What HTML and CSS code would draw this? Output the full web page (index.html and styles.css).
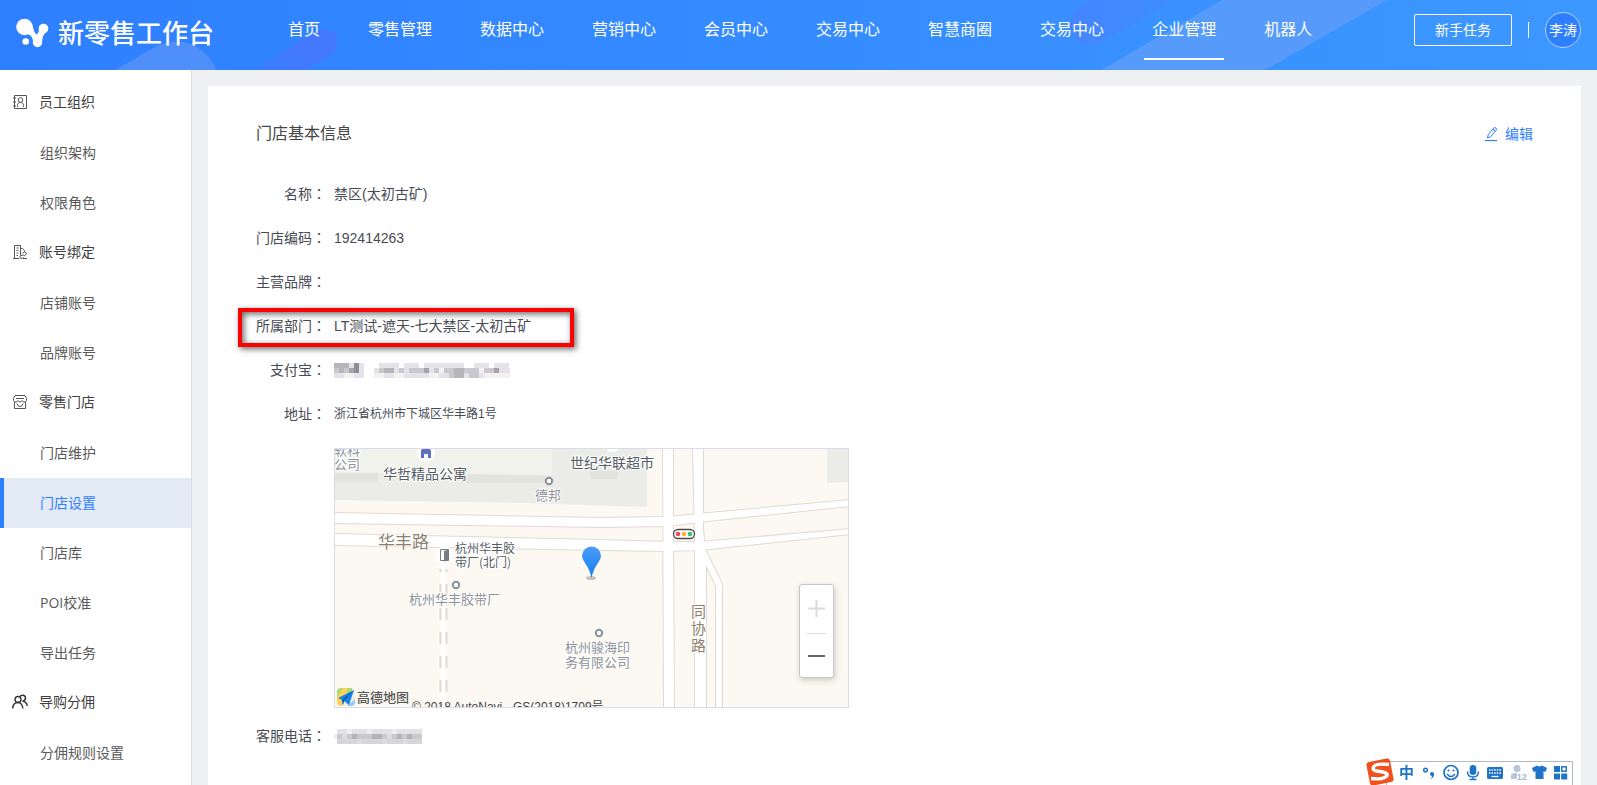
FILE: index.html
```html
<!DOCTYPE html>
<html lang="zh-CN">
<head>
<meta charset="utf-8">
<title>新零售工作台</title>
<meta name="viewport" content="width=device-width, initial-scale=1">
<link rel="stylesheet" href="styles.css">
</head>
<body>
<header class="topbar">
  <svg class="topbar-art" width="1597" height="70" viewBox="0 0 1597 70" aria-hidden="true">
    <defs>
      <linearGradient id="violetA" x1="0" y1="1" x2="1" y2="0"><stop offset="0" stop-color="#4478ff" stop-opacity=".3"/><stop offset=".5" stop-color="#4478ff"/></linearGradient>
      <linearGradient id="violetB" x1="0" y1="0" x2="1" y2="0"><stop offset="0" stop-color="#4585fd"/><stop offset="1" stop-color="#4585fd" stop-opacity=".3"/></linearGradient>
    </defs>
    <path d="M115 70 157 46Q175 38 191 44Q209 52 216 70Z" fill="#4f8ffa"/>
    <path d="M252 70 315 32Q330 26 336 36Q341 49 328 57L306 70Z" fill="url(#violetA)"/>
    <path d="M1090 0 1079 7Q1067 18 1072 34Q1080 50 1098 44Q1106 40 1174 0Z" fill="url(#violetB)"/>
    <path d="M1101 70 1222 0H1387L1265 70Z" fill="#569afa"/>
  </svg>
  <a class="brand" href="#">
    <svg class="brand-mark" width="34" height="30" viewBox="0 0 34 30" aria-hidden="true">
      <g fill="#fff"><circle cx="8.500" cy="9" r="8.300"/><circle cx="27.500" cy="10.500" r="4.800"/><circle cx="21.500" cy="24.500" r="4.700"/><circle cx="9.700" cy="23.500" r="3.300"/>
      <path d="M14 4Q17 8 17.500 11Q19 17 21 16Q23 15 23 10L31 13Q26 17 26 25L17 24.500Q17 18 12.500 16.500L8 15Z"/></g>
    </svg>
    <span class="brand-name">新零售工作台</span>
  </a>
  <nav class="nav" aria-label="主导航">
    <a href="#">首页</a><a href="#">零售管理</a><a href="#">数据中心</a><a href="#">营销中心</a><a href="#">会员中心</a><a href="#">交易中心</a><a href="#">智慧商圈</a><a href="#">交易中心</a><a class="current" href="#">企业管理</a><a href="#">机器人</a>
  </nav>
  <div class="account">
    <button class="task-btn" type="button">新手任务</button>
    <span class="divider"></span>
    <button class="avatar" type="button">李涛</button>
  </div>
</header>

<div class="layout">
  <nav class="sidebar" aria-label="企业管理">
    <div class="group">
      <svg class="ico" width="16" height="16" viewBox="0 0 16 16" aria-hidden="true"><path d="M2.500 1.500h12v13h-12zM1 4h3M1 8h3M1 12h3M5.500 13v-1.500c0-2 1-3 3-3s3 1 3 3V13"/><circle cx="8.500" cy="6" r="2.300"/></svg>
      员工组织
    </div>
    <a href="#">组织架构</a>
    <a href="#">权限角色</a>
    <div class="group">
      <svg class="ico" width="16" height="16" viewBox="0 0 16 16" aria-hidden="true"><path d="M1 14.500h6M2.500 14.500v-13h6v10M8.500 4.500h2l2 2v1M4.500 4h2M4.500 6.500h2M4.500 9h2M4.500 11.500h1.500M10 9.500l1-1q2-1 3 0q1 1.500-.5 2.500l-1.500 1M12 11l-3 .5q-2 1-1 2.300q1 1 2.500.4l1-1M11 14.500h4"/></svg>
      账号绑定
    </div>
    <a href="#">店铺账号</a>
    <a href="#">品牌账号</a>
    <div class="group">
      <svg class="ico" width="16" height="16" viewBox="0 0 16 16" aria-hidden="true"><path d="M3 1.500h10l1.500 3v2q-1 2-2.500 1.500q-1.200 0-2-1.500q-.8 1.500-2 1.500T6 6.500Q5.200 8 4 8Q2.500 8.500 1.500 6.500v-2zM4 4.500h8M2.500 8v6.500h11V8M5 9.500q.5 3 3 3t3-3"/></svg>
      零售门店
    </div>
    <a href="#">门店维护</a>
    <a class="active" href="#">门店设置</a>
    <a href="#">门店库</a>
    <a href="#">POI校准</a>
    <a href="#">导出任务</a>
    <div class="group">
      <svg class="ico bold" width="16" height="16" viewBox="0 0 16 16" aria-hidden="true"><circle cx="6" cy="5.500" r="3"/><path d="M.7 14.500Q1 8.500 6 8.500Q10 8.500 11 14.500M8 2.500Q9 1 11 1.200Q13.700 1.700 13.500 4.500Q13 7 10.500 7.200Q14.700 7.500 15.300 12"/></svg>
      导购分佣
    </div>
    <a href="#">分佣规则设置</a>
  </nav>

  <main class="content">
    <section class="card">
      <div class="card-head">
        <h1>门店基本信息</h1>
        <a class="edit" href="#">
          <svg width="14" height="16" viewBox="0 0 14 16" fill="none" stroke="currentColor" aria-hidden="true"><path d="M1 14.500h12" stroke-width="1.200"/><path d="M3.500 12l.7-3.200L9.800 2q1-1 2.100 0t.2 2.200L6.500 10.800zM9 3.200l2 1.800"/></svg>
          编辑
        </a>
      </div>
      <dl class="info">
        <div class="row"><dt>名称<span class="colon" lang="zh-TW">：</span></dt><dd>禁区(太初古矿)</dd></div>
        <div class="row"><dt>门店编码<span class="colon" lang="zh-TW">：</span></dt><dd>192414263</dd></div>
        <div class="row"><dt>主营品牌<span class="colon" lang="zh-TW">：</span></dt><dd></dd></div>
        <div class="row marked"><dt>所属部门<span class="colon" lang="zh-TW">：</span></dt><dd>LT测试-遮天-七大禁区-太初古矿</dd></div>
        <div class="row"><dt>支付宝<span class="colon" lang="zh-TW">：</span></dt><dd>
          <svg class="mosaic" width="176" height="15" viewBox="0 0 176 15" shape-rendering="crispEdges" role="img" aria-label="已隐藏">
            <path fill="#e3e4ea" d="M0 0h30v15H0zM40 5h136v10H40zM45 0h20v5H45zM70 0h15v5H70zM90 0h40v5H90zM140 0h15v5h-15zM160 0h15v5h-15z"/>
            <path fill="#b5b6ba" d="M0 0h15v5H0zM5 5h5v5H5zM50 5h10v5H50zM120 5h10v10h-10z"/>
            <path fill="#c8c8cd" d="M0 5h5v5H0zM10 5h5v5h-5zM45 5h5v5h-5zM65 5h5v5h-5zM75 5h15v5H75zM100 5h5v5h-5zM110 5h10v5h-10zM115 10h5v5h-5zM130 5h15v5h-15zM150 5h10v5h-10zM135 10h10v5h-10z"/>
            <path fill="#8e8f96" d="M20 5h5v5h-5zM20 0h5v5h-5z"/><path fill="#aaa1ad" d="M15 5h5v5h-5zM90 5h5v5h-5zM160 5h5v5h-5z"/>
            <path fill="#f5f1f0" d="M10 10h10v5H10zM40 10h10v5H40zM60 10h10v5H60zM95 10h10v5H95zM150 10h26v5h-26zM105 5h5v5h-5zM145 5h5v5h-5z"/>
          </svg></dd></div>
        <div class="row"><dt>地址<span class="colon" lang="zh-TW">：</span></dt><dd class="address">浙江省杭州市下城区华丰路1号</dd></div>
        <div class="row map-row"><dt></dt><dd>
          <div class="map">
            <svg class="map-art" viewBox="0 0 513 258" role="img" aria-label="门店位置地图">
              <defs>
                <linearGradient id="pin" x1="0" y1="0" x2="0" y2="1"><stop offset="0" stop-color="#4b9bf8"/><stop offset="1" stop-color="#1580ec"/></linearGradient>
                <g id="roads">
                  <path d="M-2 64 265 69 333 68 363 65 515 51V57L363 73 333 77 265 78-2 74Z"/>
                  <path d="M-2 85 265 91 333 93H365L515 80V85L365 101 333 102 265 101-2 96Z"/>
                  <path d="M328-2H338V85L339 260H329Z"/>
                  <path d="M358-2H368V80L371 110V260H360V90Z"/>
                  <path d="M368 96 387 135V260H381V137L368 110Z"/>
                </g>
              </defs>
              <rect width="513" height="258" fill="#fcf9f2"/>
              <path d="M0 0H312V58L190 54 0 51Z" fill="#ebebe7"/>
              <path d="M0 0H43V24H0zM43 0H217V26L43 24z" fill="#f2f2ec"/>
              <path d="M0 24H43V33H0zM132 25 217 27V34H132zM255 0H283V30H255z" fill="#e3e3de"/>
              <path d="M255 0H312V22H255z" fill="#ebebe7"/>
              <path d="M492 0H513V33L492 34z" fill="#ebebe7"/>
              <use href="#roads" fill="#fff" stroke="#e0dbd0" stroke-width="2"/>
              <use href="#roads" fill="#fff"/>
              <path d="M108 115V258" stroke="#fff" stroke-width="5"/>
              <path d="M105.500 120V258M111.500 120V258" stroke="#e0dbd0" stroke-width="2" stroke-dasharray="12 12" stroke-dashoffset="9"/>
              <circle cx="91" cy="4" r="9" fill="#fff"/><path d="M86 1L91-2 96 1V9H93V5H89V9H86z" fill="#5d70c4"/>
              <circle cx="278" cy="-5" r="8" fill="#fff"/>
              <circle cx="109" cy="106" r="9" fill="#fff"/><path d="M105.500 100.500h8v11h-8z" fill="#fff" stroke="#777f85"/><path d="M109 102l4.500-1.500v11l-4.500 1z" fill="#777f85"/>
              <g fill="#fff" stroke="#8a9298" stroke-width="2"><circle cx="214" cy="32" r="3.200"/><circle cx="121" cy="136" r="3.200"/><circle cx="264" cy="184" r="3.200"/></g>
              <g class="place">
                <text x="-1" y="6">软科</text><text x="-1" y="20">公司</text>
                <text x="200" y="51">德邦</text>
                <text x="74" y="155">杭州华丰胶带厂</text>
                <text x="230" y="203">杭州骏海印</text><text x="230" y="218">务有限公司</text>
              </g>
              <g class="place strong">
                <text x="48" y="30">华哲精品公寓</text><text x="235" y="19">世纪华联超市</text>
              </g>
              <g class="place gate"><text x="120" y="104">杭州华丰胶</text><text x="120" y="118">带厂(北门)</text></g>
              <g class="place road"><text x="43" y="99">华丰路</text></g>
              <g class="place road side"><text x="356" y="168">同</text><text x="356" y="185">协</text><text x="356" y="202">路</text></g>
              <rect x="338.500" y="80.500" width="21" height="9" rx="4.500" fill="#fff" stroke="#4b4b4b" stroke-width="1.300"/>
              <circle cx="343" cy="85" r="2.300" fill="#f04b5d"/><circle cx="349" cy="85" r="2.300" fill="#fcb42b"/><circle cx="355" cy="85" r="2.300" fill="#3bc46b"/>
              <ellipse cx="256" cy="129" rx="5" ry="2" fill="#c9c0bc"/>
              <path d="M256.500 129Q255 121 250 114Q247 110 247 107A9.500 9.500 0 0 1 266 107Q266 110 263 114Q258 121 256.500 129Z" fill="url(#pin)"/>
              <rect x="2" y="239" width="18" height="18" rx="4" fill="#f4efe0"/><path d="M2 250V243q0-4 4-4h11v5z" fill="#a8dc71"/><path d="M2 248l6-9h5l-6 18H5q-3-1-3-4z" fill="#ffd257"/><path d="M12 257l8-7v4q0 3-4 3z" fill="#9cc8f5"/>
              <path d="M3 249 19 241 14 256 9 252 8 256 7 251Z" fill="#1685ea"/><path d="M7 251 19 241 9 252 8 256z" fill="#075eb4"/>
              <text class="map-brand" x="22" y="253">高德地图</text>
              <text class="copyright" x="77" y="262">© 2018 AutoNavi - GS(2018)1709号</text>
            </svg>
            <div class="zoom">
              <button type="button" aria-label="放大" disabled><svg width="17" height="17" viewBox="0 0 17 17"><path d="M0 8.500h17M8.500 0v17" stroke="#dcdcdc" stroke-width="2"/></svg></button>
              <button type="button" aria-label="缩小"><svg width="17" height="17" viewBox="0 0 17 17"><path d="M0 10h17" stroke="#666660" stroke-width="2"/></svg></button>
            </div>
          </div>
        </dd></div>
        <div class="row"><dt>客服电话<span class="colon" lang="zh-TW">：</span></dt><dd>
          <svg class="mosaic" width="88" height="15" viewBox="0 0 88 15" shape-rendering="crispEdges" role="img" aria-label="已隐藏">
            <path fill="#e2e2e6" d="M3 0h85v5H3z"/><path fill="#c9c9cf" d="M3 5h85v5H3z"/><path fill="#d6d6da" d="M3 10h85v5H3z"/>
            <path fill="#b3b3b9" d="M18 5h5v5h-5zM38 5h10v5H38zM63 5h5v5h-5zM73 5h5v5h-5z"/><path fill="#dcdce1" d="M8 5h5v5H8zM53 5h5v5h-5zM23 10h5v5h-5zM48 10h5v5h-5zM68 10h5v5h-5z"/><path fill="#eeeef1" d="M0 5h3v5H0zM13 0h5v5h-5zM33 0h5v5h-5zM58 0h5v5h-5z"/>
          </svg></dd></div>
      </dl>
    </section>
  </main>
</div>

<div class="ime">
  <svg width="207" height="27" viewBox="0 0 207 27" role="img" aria-label="输入法">
    <rect x="20.500" y="3.500" width="186" height="26" fill="#fff" stroke="#b4b8c2"/>
    <rect x="2" y="2" width="24" height="24" rx="3" transform="rotate(-11 14 14)" fill="#f0501e"/>
    <path d="M23 6.500Q8 5 7 10Q7 13 14 13.500Q22 14.500 21 17.500Q18 22 5 20.500" fill="none" stroke="#fff" stroke-width="3.500"/>
    <text class="ime-mode" x="33" y="20">中</text>
    <g fill="none" stroke="#1f74c8">
      <circle cx="59.500" cy="12" r="1.800" stroke-width="1.500"/>
      <circle cx="85" cy="14.500" r="7" stroke-width="1.700"/><path d="M81 16q4 5 8 0" stroke-width="1.400"/>
      <path d="M101.500 13.500q0 5.500 5.500 5.500t5.500-5.500M107 19v3M103.500 21.500h7" stroke-width="1.500"/>
      <rect x="195.800" y="8.800" width="4.400" height="4.400" stroke-width="1.500"/>
    </g>
    <g fill="#1f74c8">
      <circle cx="66" cy="16" r="2"/><path d="M68 16q0 4-3.500 5 2-2 1.500-4z"/>
      <circle cx="82.500" cy="12.500" r="1.100"/><circle cx="87.500" cy="12.500" r="1.100"/>
      <rect x="103.700" y="7" width="6.600" height="10" rx="3.300"/>
      <rect x="121" y="9" width="16" height="12" rx="1.500"/>
      <path d="M166 10l5-2.500q2.500 2 5 0l5 2.500-1.500 4-2-.7V21h-8v-7.700l-2 .7z"/>
      <path d="M188 8h6v6h-6zM188 15.500h6v6h-6zM195.200 15.500h6v6h-6z"/>
    </g>
    <path d="M123 12h12M123 15h12" stroke="#fff" stroke-width="1.400" stroke-dasharray="1.500 1.100"/><path d="M125.500 18.500h7" stroke="#fff" stroke-width="1.300"/>
    <g fill="#b8c4da"><circle cx="151" cy="10.500" r="3.500"/><path d="M145 21v-3q0-3 4-3h5v6z"/><rect x="151" y="15" width="10" height="7" fill="#fff"/></g>
    <text class="ime-age" x="151" y="22">12</text>
  </svg>
</div>
</body>
</html>
```

FILE: styles.css
```css
*, *::before, *::after { box-sizing: border-box; }

body {
  margin: 0;
  min-height: 100vh;
  display: flex;
  flex-direction: column;
  background: #eff0f4;
  color: #454545;
  font: 14px/22px "Open Sans", "Noto Sans CJK SC", sans-serif;
  font-weight: 400;
}

a { color: inherit; text-decoration: none; }
button { font: inherit; color: inherit; padding: 0; cursor: pointer; }

.topbar {
  position: relative;
  display: flex;
  align-items: flex-start;
  height: 70px;
  overflow: hidden;
  background: linear-gradient(90deg, #2e7fff, #3c98ff);
  color: #fff;
}
.topbar-art { position: absolute; top: 0; left: 0; }
.brand, .nav, .account { position: relative; display: flex; }
.brand {
  align-items: center;
  flex: 0 0 264px;
  height: 66px;
  margin-left: 16px;
  gap: 8px;
}
.brand-name { font-size: 26px; font-weight: 500; line-height: 32px; white-space: nowrap; }
.nav { gap: 32px; font-size: 16px; }
.nav a {
  height: 60px;
  padding: 0 8px;
  line-height: 58px;
  white-space: nowrap;
}
.nav .current { border-bottom: 2px solid #fff; }
.account {
  align-items: center;
  gap: 16px;
  height: 60px;
  margin-left: auto;
  padding-right: 16px;
}
.task-btn {
  width: 98px;
  height: 32px;
  border: 1px solid #fff;
  border-radius: 2px;
  background: none;
}
.divider { width: 1px; height: 16px; background: #fff; }
.avatar {
  width: 36px;
  height: 36px;
  border: 1px solid #b4d2ff;
  border-radius: 50%;
  background: #2e7fff;
  white-space: nowrap;
}

.layout { display: flex; flex: 1; }
.sidebar {
  flex: 0 0 192px;
  padding-top: 8px;
  border-right: 1px solid #dcdee4;
  background: #fff;
}
.sidebar a, .group { display: flex; align-items: center; height: 50px; }
.sidebar a { padding-left: 36px; border-left: 4px solid transparent; color: #5a5a5a; }
.sidebar .active { border-left-color: #2e7fff; background: #e2eaf6; color: #2e7fff; }
.group { gap: 11px; padding: 0 0 2px 12px; color: #404040; }
.ico { fill: none; stroke: #555; stroke-width: 1; }
.ico.bold { stroke: #333; stroke-width: 1.4; }

.content { flex: 1; display: flex; padding: 16px 16px 0; min-width: 0; }
.card { flex: 1; padding: 36px 48px 0; background: #fff; }
.card-head { display: flex; align-items: center; justify-content: space-between; height: 24px; }
.card-head h1 { margin: 0; font-size: 16px; line-height: 22px; padding-bottom: 2px; font-weight: 400; }
.edit { display: flex; align-items: center; gap: 7px; color: #2e7fff; }

.info {
  margin: 26px 0 0;
  color: #484b54;
  font-family: "Liberation Sans", "Noto Sans CJK SC", sans-serif;
}
.row { position: relative; display: flex; align-items: center; min-height: 44px; }
.row dt { flex: 0 0 70px; text-align: right; white-space: nowrap; }
.row dd { margin: 0 0 0 8px; }
.row .address { font-size: 12px; }
.colon { font-family: "Noto Sans CJK TC", sans-serif; line-height: 1; }
.mosaic { display: block; }
.marked::after {
  content: "";
  position: absolute;
  top: 4px;
  left: -18px;
  width: 336px;
  height: 39px;
  border: 4px solid #f00;
  box-shadow: 2px 2px 6px rgba(0, 0, 0, .6), inset 2px 2px 6px rgba(0, 0, 0, .6);
}
.map-row { padding: 12px 0 6px; }
.map-row dd { flex: 0 1 515px; }

.map { position: relative; border: 1px solid #d9ddeb; }
.map-art { display: block; width: 100%; }
.place {
  fill: #8d9299;
  stroke: #fff;
  stroke-width: 2px;
  paint-order: stroke;
  font: 13px "Noto Sans CJK SC", sans-serif;
}
.place.strong { fill: #555b63; font-size: 14px; }
.place.gate { fill: #555b63; font-size: 12px; }
.place.road { fill: #8f7f6f; font-size: 17px; }
.place.side { font-size: 15px; }
.map-brand { fill: #555; font: 500 13px "Noto Sans CJK SC", sans-serif; }
.copyright { fill: #444; font: 12px "Liberation Sans", "Noto Sans CJK SC", sans-serif; }
.zoom {
  position: absolute;
  right: 14px;
  bottom: 29px;
  width: 35px;
  border: 1px solid #c8c8c8;
  border-radius: 3px;
  background: #fff;
  box-shadow: 1px 2px 6px rgba(0, 0, 0, .2);
}
.zoom button {
  display: flex;
  align-items: center;
  justify-content: center;
  width: 100%;
  height: 46px;
  border: 0;
  background: none;
}
.zoom::after {
  content: "";
  position: absolute;
  top: 48px;
  left: 7px;
  right: 7px;
  height: 1px;
  background: #dcdcdc;
}

.ime { position: fixed; right: 24px; bottom: 0; height: 27px; }
.ime svg { display: block; }
.ime-mode { fill: #1f74c8; font: bold 15px "Noto Sans CJK SC", sans-serif; }
.ime-age { fill: #a5b5d0; font: bold 9px "Liberation Sans", sans-serif; }
```
